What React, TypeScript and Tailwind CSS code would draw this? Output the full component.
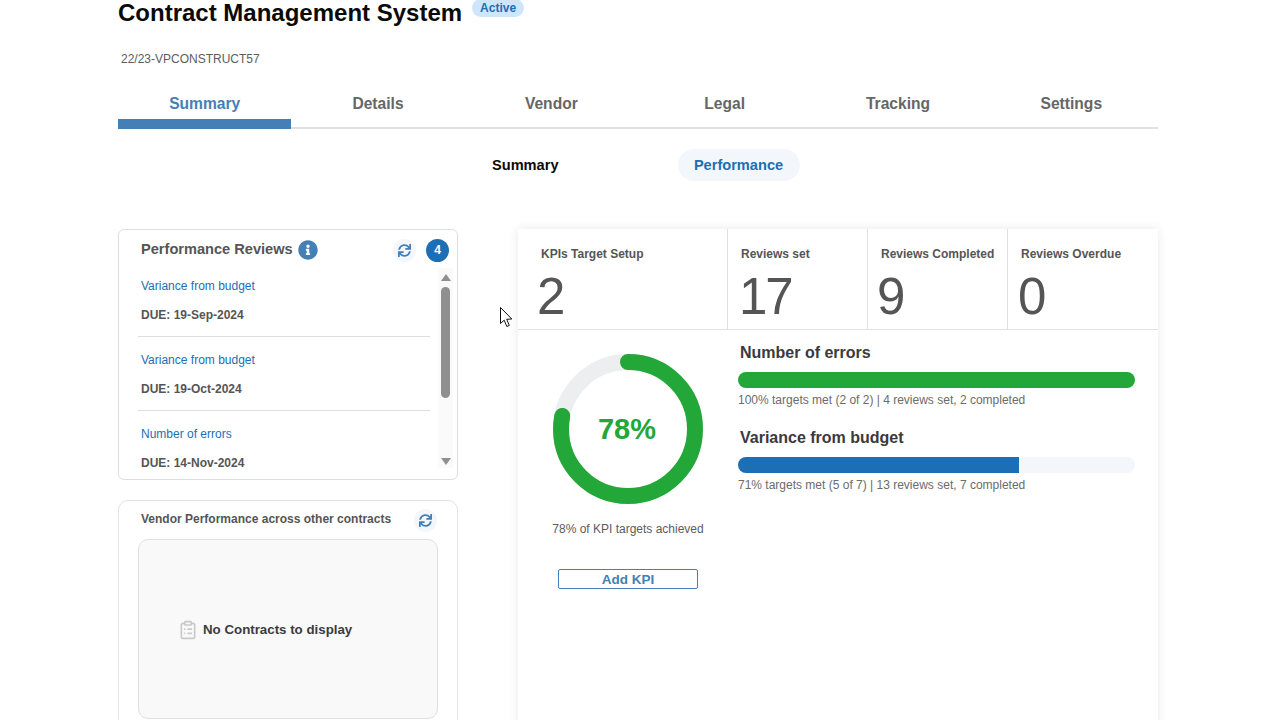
import { FaInfoCircle, FaSync } from "react-icons/fa";
import { ClipboardList } from "lucide-react";

const TABS = ["Summary", "Details", "Vendor", "Legal", "Tracking", "Settings"];

const REVIEWS = [
  { name: "Variance from budget", due: "DUE: 19-Sep-2024" },
  { name: "Variance from budget", due: "DUE: 19-Oct-2024" },
  { name: "Number of errors", due: "DUE: 14-Nov-2024" },
];

const STATS = [
  { label: "KPIs Target Setup", value: "2", width: "w-[210px]", pad: "pl-[19px]", labelPad: "pl-[4px]" },
  { label: "Reviews set", value: "17", width: "w-[140px]", pad: "pl-[11px]", labelPad: "pl-[2px]" },
  { label: "Reviews Completed", value: "9", width: "w-[140px]", pad: "pl-[9px]", labelPad: "pl-[4px]" },
  { label: "Reviews Overdue", value: "0", width: "w-[150px]", pad: "pl-[10px]", labelPad: "pl-[3px]" },
];

function RefreshButton() {
  return (
    <div className="flex h-[23px] w-[23px] items-center justify-center rounded-full bg-[#f3f7fc] text-[#4480b5]">
      <FaSync size={13} />
    </div>
  );
}

function KpiBar({ title, pct, color, caption }: { title: string; pct: number; color: string; caption: string }) {
  return (
    <div className="h-[85px]">
      <div className="ml-[2px] h-[20px] text-[16px] leading-[20px] font-bold text-[#3a3a3a]">{title}</div>
      <div className="mt-[9px] h-[16px] w-[397px] overflow-hidden rounded-full bg-[#f3f7fc]">
        <div className={`h-full ${color}`} style={{ width: `${pct}%` }} />
      </div>
      <div className="mt-[3px] text-[12px] leading-[18px] text-[#6b6b6b]">{caption}</div>
    </div>
  );
}

export default function App() {
  return (
    <div className="relative h-[720px] w-[1280px] overflow-hidden bg-white px-[118px] font-['Liberation_Sans',Arial,sans-serif]">
      <div className="flex h-[26px] items-start">
        <h1 className="text-[24px] leading-[26px] font-bold text-[#0a0a0a]">Contract Management System</h1>
        <span className="ml-[10px] -mt-[1px] flex h-[18px] w-[52px] items-center justify-center rounded-full bg-[#cde6fb] text-[12px] font-bold text-[#1c6eb5]">
          Active
        </span>
      </div>
      <div className="mt-[25px] ml-[3px] text-[12px] leading-[16px] text-[#5c5c5c]">22/23-VPCONSTRUCT57</div>

      <div className="mt-[25px] flex h-[37px] w-[1040px] border-b-2 border-[#e0e0e0]">
        {TABS.map((t, i) =>
          i === 0 ? (
            <div key={t} className="-mb-[2px] h-[37px] flex-1 border-b-[10px] border-[#4480b5] pt-[3px] text-center text-[15.6px] leading-[18px] font-bold text-[#4480b5]">
              {t}
            </div>
          ) : (
            <div key={t} className="flex-1 pt-[3px] text-center text-[15.6px] leading-[18px] font-bold text-[#666666]">
              {t}
            </div>
          ),
        )}
      </div>

      <div className="mt-[20px] flex h-[32px] items-center">
        <div className="ml-[374px] pt-[1px] text-[14.6px] font-bold text-[#0a0a0a]">Summary</div>
        <div className="ml-[119px] flex h-[32px] w-[122px] items-center justify-center rounded-full bg-[#f3f7fc] pt-[1px] text-[14.6px] font-bold text-[#1c6eb5]">
          Performance
        </div>
      </div>

      <div className="mt-[48px] flex gap-[60px]">
        <div className="flex w-[340px] flex-col gap-[20px]">
          <div className="relative h-[251px] rounded-[6px] border border-[#dedede] bg-white">
            <div className="flex h-[38px] items-center pt-[1px] pr-[8px] pl-[22px]">
              <span className="text-[14.6px] font-bold text-[#555555]">Performance Reviews</span>
              <FaInfoCircle size={20} className="ml-[5px] text-[#4480b5]" />
              <div className="mt-[1px] ml-auto flex items-center gap-[10px]">
                <RefreshButton />
                <div className="flex h-[23px] w-[23px] items-center justify-center rounded-full bg-[#1c6eb5] text-[12px] font-bold text-white">4</div>
              </div>
            </div>
            <div className="h-[211px] overflow-hidden pl-[19px]">
              {REVIEWS.map((r, i) => (
                <div key={i} className={`w-[292px] ${i === 0 ? "h-[69px] pt-[9px]" : "h-[74px] pt-[14px]"} ${i < 2 ? "border-b border-[#dedede]" : ""}`}>
                  <div className="pl-[3px] text-[12px] leading-[18px] text-[#1c6eb5]">{r.name}</div>
                  <div className="mt-[11px] pl-[3px] text-[12px] leading-[18px] font-bold text-[#555555]">{r.due}</div>
                </div>
              ))}
            </div>
            {/* fake scrollbar, sits over the list */}
            <div className="absolute top-[38px] right-[4px] flex h-[200px] w-[15px] flex-col items-center bg-[#fafafa]">
              <svg width="10" height="7" viewBox="0 0 10 7" className="mt-[6px]"><path d="M5 0 L10 7 L0 7 Z" fill="#8f8f8f" /></svg>
              <div className="mt-[6px] h-[111px] w-[9px] rounded-full bg-[#8f8f8f]" />
              <svg width="10" height="7" viewBox="0 0 10 7" className="mt-auto mb-[3px]"><path d="M0 0 L10 0 L5 7 Z" fill="#8f8f8f" /></svg>
            </div>
          </div>

          <div className="h-[260px] rounded-[10px] border border-[#e3e3e3] bg-white px-[19px]">
            <div className="flex h-[38px] items-center">
              <span className="-mt-[3px] pl-[3px] text-[12px] font-bold text-[#555555]">Vendor Performance across other contracts</span>
              <div className="ml-[23px]"><RefreshButton /></div>
            </div>
            <div className="flex h-[180px] w-[300px] items-center rounded-[10px] border border-[#e0e0e0] bg-[#f9f9f9] pt-[1px] pl-[39px]">
              <ClipboardList size={20} strokeWidth={2} className="text-[#c9c9c9]" />
              <span className="ml-[5px] text-[13.3px] font-bold text-[#3c3c3c]">No Contracts to display</span>
            </div>
          </div>
        </div>

        <div className="h-[520px] w-[640px] bg-white shadow-[0_0_10px_rgba(0,0,0,0.09)]">
          <div className="flex h-[101px] border-b border-[#e0e0e0]">
            {STATS.map((s, i) => (
              <div key={s.label} className={`${s.width} ${s.pad} h-full pt-[16px] ${i < 3 ? "border-r border-[#e0e0e0]" : ""}`}>
                <div className={`${s.labelPad} text-[12px] leading-[18px] font-bold text-[#555555]`}>{s.label}</div>
                <div className="mt-[8px] text-[51px] leading-[52px] tracking-[-2px] text-[#555555]">{s.value}</div>
              </div>
            ))}
          </div>
          <div className="flex">
            <div className="flex w-[220px] flex-col items-center pt-[24px]">
              <div className="relative h-[150px] w-[150px]">
                <svg width="150" height="150" viewBox="0 0 150 150" className="-rotate-90">
                  <circle cx="75" cy="75" r="67" fill="none" stroke="#eceef0" strokeWidth="16" />
                  <circle cx="75" cy="75" r="67" fill="none" stroke="#22a738" strokeWidth="16" strokeLinecap="round" strokeDasharray="328.4 421" />
                </svg>
                <div className="absolute inset-0 flex items-center justify-center pt-[1px] pr-[2px] text-[29px] font-bold text-[#22a738]">78%</div>
              </div>
              <div className="mt-[16px] text-[12px] leading-[18px] text-[#5c5c5c]">78% of KPI targets achieved</div>
              <button className="mt-[31px] h-[20px] w-[140px] rounded-[2px] border border-[#4480b5] pt-[1px] text-[13.5px] leading-[18px] font-bold text-[#4480b5]">
                Add KPI
              </button>
            </div>
            <div className="pt-[13px]">
              <KpiBar title="Number of errors" pct={100} color="bg-[#22a738]" caption="100% targets met (2 of 2) | 4 reviews set, 2 completed" />
              <KpiBar title="Variance from budget" pct={70.8} color="bg-[#1c6eb5]" caption="71% targets met (5 of 7) | 13 reviews set, 7 completed" />
            </div>
          </div>
        </div>
      </div>

      {/* mouse pointer caught in the screenshot */}
      <svg width="14" height="21" viewBox="0 0 14 21" className="absolute top-[307px] left-[500px]">
        <path d="M0.5 0.5 L0.5 16.5 L4.2 13.2 L6.8 19.5 L9.3 18.4 L6.7 12.3 L11.8 12 Z" fill="white" stroke="#111" strokeWidth="1" />
      </svg>
    </div>
  );
}
